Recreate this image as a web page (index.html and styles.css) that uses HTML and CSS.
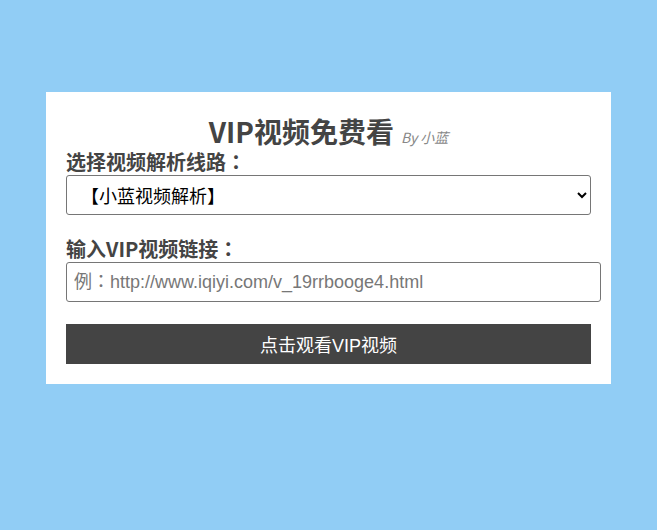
FILE: index.html
```html
<!DOCTYPE html>
<html>
<head>
<meta charset="utf-8">
<title>VIP视频免费看</title>
<link rel="stylesheet" href="styles.css">
</head>
<body>
<div class="card">
  <h1 class="title">VIP视频免费看<small class="by">By 小蓝</small></h1>
  <label class="label" for="line">选择视频解析线路<span class="colon">：</span></label>
  <select class="select" id="line">
    <option>【小蓝视频解析】</option>
  </select>
  <label class="label label-2" for="url">输入VIP视频链接<span class="colon">：</span></label>
  <input class="input" id="url" type="text" placeholder="例：http://www.iqiyi.com/v_19rrbooge4.html">
  <button class="button" type="button">点击观看VIP视频</button>
</div>
</body>
</html>
```
FILE: styles.css
```css
html, body {
  margin: 0;
  padding: 0;
}
body {
  background: #91cdf5;
  font-family: "Noto Sans CJK SC", "Liberation Sans", sans-serif;
  height: 530px;
  overflow: hidden;
}
.card {
  width: 525px;
  margin: 92px auto 0;
  padding: 20px;
  background: #fff;
  display: flex;
  flex-direction: column;
}
.title {
  margin: 0;
  height: 39px;
  text-align: center;
  font-size: 28px;
  line-height: 39px;
  font-weight: bold;
  color: #444;
  overflow: hidden;
}
.by {
  font-size: 14px;
  line-height: 0;
  font-weight: normal;
  font-style: italic;
  color: #888;
  margin-left: 7px;
}
.label {
  display: block;
  height: 22px;
  font-size: 20px;
  line-height: 22px;
  font-weight: bold;
  color: #444;
  margin-bottom: 2px;
}
.colon {
  font-family: "Noto Sans CJK TC", sans-serif;
}
.label-2 {
  margin-top: 23px;
}
.select {
  width: 525px;
  height: 40px;
  box-sizing: border-box;
  font-family: "Noto Sans CJK SC", sans-serif;
  font-size: 18px;
  color: #000;
  padding: 0 6px 0 10px;
  border: 1px solid #767676;
  border-radius: 3px;
  background: #fff;
}
.input {
  width: 525px;
  height: 38px;
  box-sizing: content-box;
  padding: 0 1px 0 7px;
  border: 1px solid #767676;
  border-radius: 3px;
  font-family: "Liberation Sans", "Noto Sans CJK TC", sans-serif;
  font-size: 18px;
  color: #000;
  outline: none;
}
.input::placeholder {
  color: #777;
}
.button {
  margin-top: 22px;
  width: 525px;
  height: 40px;
  border: 0;
  background: #444;
  color: #fff;
  font-family: "Liberation Sans", "Noto Sans CJK SC", sans-serif;
  font-size: 18px;
  padding: 0;
}
```
